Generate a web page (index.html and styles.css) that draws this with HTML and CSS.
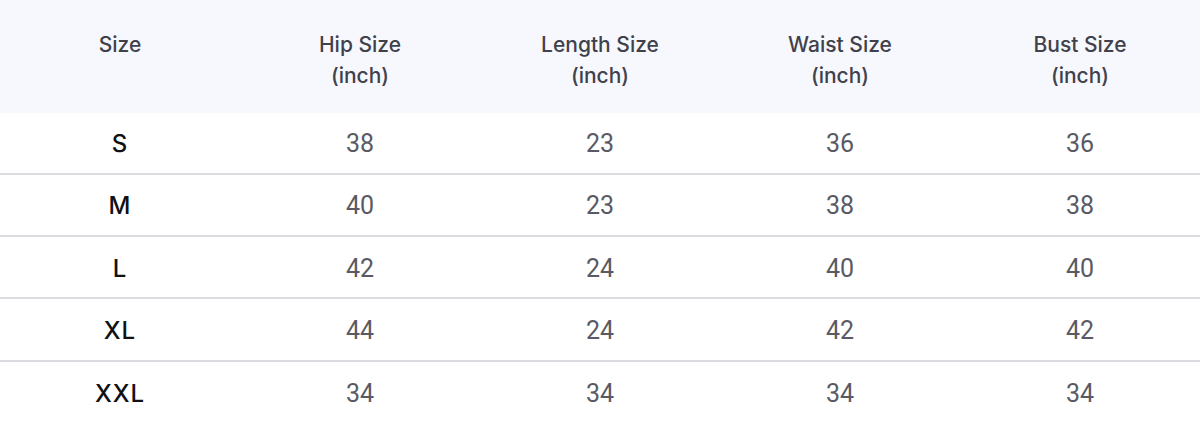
FILE: index.html
```html
<!DOCTYPE html>
<html>
<head>
<meta charset="utf-8">
<link rel="stylesheet" href="styles.css">
</head>
<body>
<div class="chart">
  <div class="row head">
    <div class="cell">Size</div>
    <div class="cell">Hip Size<br>(inch)</div>
    <div class="cell">Length Size<br>(inch)</div>
    <div class="cell">Waist Size<br>(inch)</div>
    <div class="cell">Bust Size<br>(inch)</div>
  </div>
  <div class="row"><div class="cell sz">S</div><div class="cell">38</div><div class="cell">23</div><div class="cell">36</div><div class="cell">36</div></div>
  <div class="row"><div class="cell sz">M</div><div class="cell">40</div><div class="cell">23</div><div class="cell">38</div><div class="cell">38</div></div>
  <div class="row"><div class="cell sz">L</div><div class="cell">42</div><div class="cell">24</div><div class="cell">40</div><div class="cell">40</div></div>
  <div class="row"><div class="cell sz">XL</div><div class="cell">44</div><div class="cell">24</div><div class="cell">42</div><div class="cell">42</div></div>
  <div class="row last"><div class="cell sz">XXL</div><div class="cell">34</div><div class="cell">34</div><div class="cell">34</div><div class="cell">34</div></div>
</div>
</body>
</html>
```
FILE: styles.css
```css
html, body {
  margin: 0;
  padding: 0;
  background: #ffffff;
}
.chart {
  width: 1200px;
  display: flex;
  flex-direction: column;
}
.row {
  display: grid;
  grid-template-columns: repeat(5, 1fr);
  height: 62.3px;
  box-sizing: border-box;
  border-bottom: 2px solid #dcdce0;
  align-items: center;
  padding-top: 2px;
}
.row.last {
  border-bottom: none;
}
.row.head {
  height: 112.5px;
  background: #f7f8fd;
  border-bottom: none;
  align-items: start;
  padding-top: 29px;
}
.cell {
  text-align: center;
  font-family: Roboto, "Liberation Sans", sans-serif;
  font-size: 25px;
  color: #5a5a64;
}
.head .cell {
  font-family: Inter, "Noto Sans", sans-serif;
  font-weight: 500;
  font-size: 21px;
  line-height: 31px;
  color: #41414b;
}
.cell.sz {
  font-family: Inter, "Noto Sans", sans-serif;
  font-weight: 500;
  font-size: 24px;
  letter-spacing: 1px;
  color: #111114;
}
```
